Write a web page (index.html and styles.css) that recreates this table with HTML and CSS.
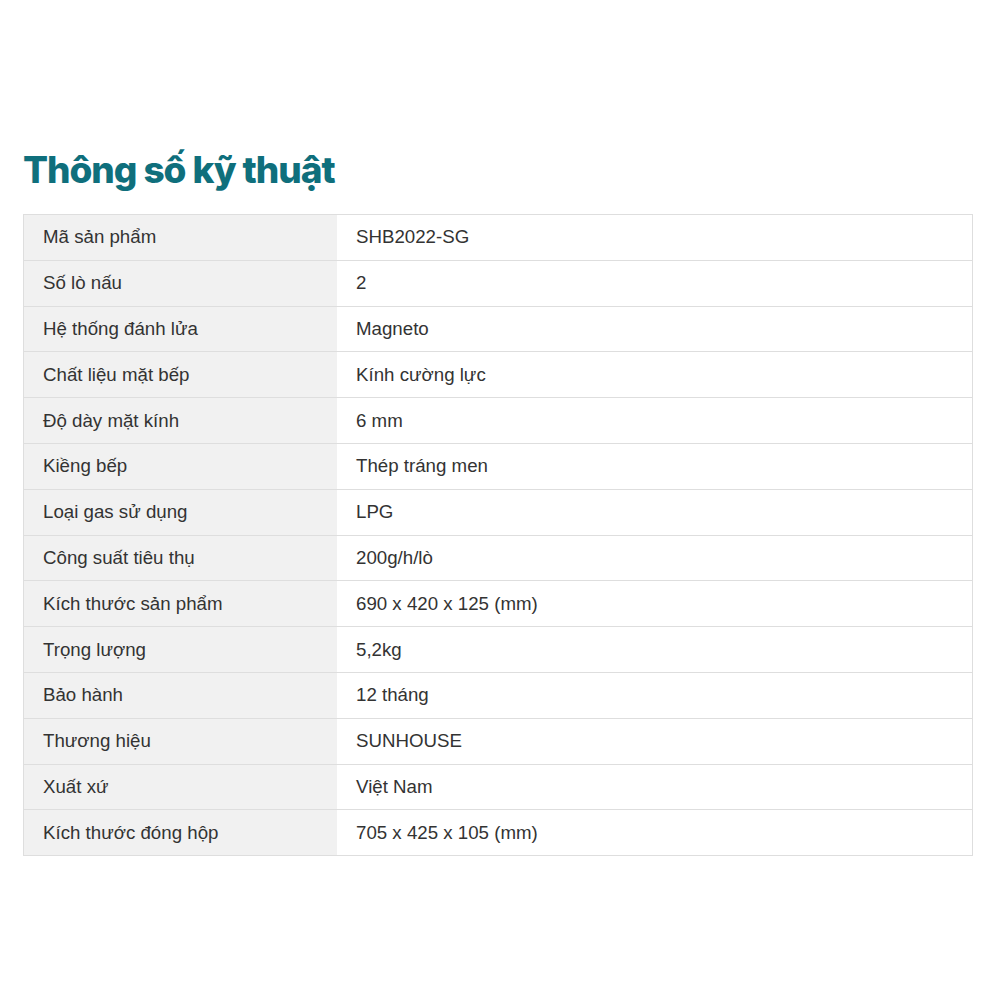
FILE: index.html
```html
<!DOCTYPE html>
<html lang="vi">
<head>
<meta charset="utf-8">
<link rel="stylesheet" href="styles.css">
</head>
<body>
<div class="page">
  <h2 class="title">Thông số kỹ thuật</h2>
  <table class="specs">
    <tr><td class="k">Mã sản phẩm</td><td class="v">SHB2022-SG</td></tr>
    <tr><td class="k">Số lò nấu</td><td class="v">2</td></tr>
    <tr><td class="k">Hệ thống đánh lửa</td><td class="v">Magneto</td></tr>
    <tr><td class="k">Chất liệu mặt bếp</td><td class="v">Kính cường lực</td></tr>
    <tr><td class="k">Độ dày mặt kính</td><td class="v">6 mm</td></tr>
    <tr><td class="k">Kiềng bếp</td><td class="v">Thép tráng men</td></tr>
    <tr><td class="k">Loại gas sử dụng</td><td class="v">LPG</td></tr>
    <tr><td class="k">Công suất tiêu thụ</td><td class="v">200g/h/lò</td></tr>
    <tr><td class="k">Kích thước sản phẩm</td><td class="v">690 x 420 x 125 (mm)</td></tr>
    <tr><td class="k">Trọng lượng</td><td class="v">5,2kg</td></tr>
    <tr><td class="k">Bảo hành</td><td class="v">12 tháng</td></tr>
    <tr><td class="k">Thương hiệu</td><td class="v">SUNHOUSE</td></tr>
    <tr><td class="k">Xuất xứ</td><td class="v">Việt Nam</td></tr>
    <tr><td class="k">Kích thước đóng hộp</td><td class="v">705 x 425 x 105 (mm)</td></tr>
  </table>
</div>
</body>
</html>
```
FILE: styles.css
```css
html, body {
  margin: 0;
  padding: 0;
  background: #fff;
}
.page {
  padding: 146px 30px 0 23px;
}
.title {
  margin: 0 0 20px 0;
  font-family: Inter, "Noto Sans", sans-serif;
  font-weight: 800;
  font-size: 37px;
  line-height: 48px;
  letter-spacing: -1.05px;
  color: #0f6f7c;
}
.specs {
  width: 950px;
  border-collapse: collapse;
  border: 1px solid #dedede;
  font-family: "Liberation Sans", Arial, sans-serif;
  font-size: 18.7px;
  color: #333;
}
.specs tr {
  height: 45.8px;
}
.specs td {
  border-top: 1px solid #dedede;
  border-bottom: 1px solid #dedede;
  padding: 0 19px;
  vertical-align: middle;
}
.specs .k {
  width: 275px;
  padding-left: 19px;
  background: #f1f1f1;
}
```
